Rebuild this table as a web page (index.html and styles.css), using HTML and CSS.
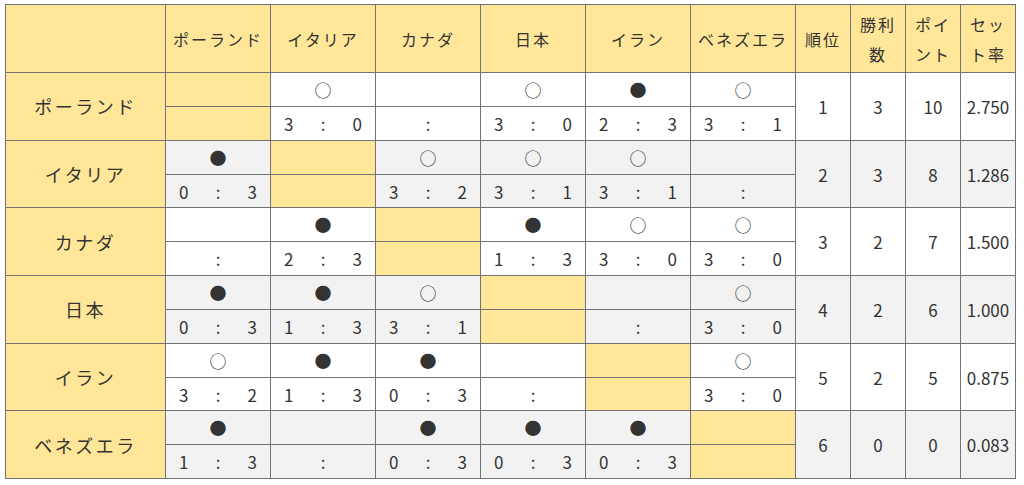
FILE: index.html
```html
<!DOCTYPE html>
<html lang="ja">
<head>
<meta charset="utf-8">
<link rel="stylesheet" href="styles.css">
</head>
<body>
<table class="league">
  <colgroup>
    <col class="c-name">
    <col class="c-team"><col class="c-team"><col class="c-team"><col class="c-team"><col class="c-team"><col class="c-team">
    <col class="c-res"><col class="c-res"><col class="c-res"><col class="c-res">
  </colgroup>
  <thead>
    <tr class="head">
      <th></th>
      <th>ポーランド</th><th>イタリア</th><th>カナダ</th><th>日本</th><th>イラン</th><th>ベネズエラ</th>
      <th>順位</th><th class="wrap">勝利数</th><th class="wrap">ポイント</th><th class="wrap">セット率</th>
    </tr>
  </thead>
  <tbody>
    <!-- ポーランド -->
    <tr class="top">
      <th rowspan="2" class="name">ポーランド</th>
      <td class="diag"></td>
      <td class="mark">○</td>
      <td class="mark"></td>
      <td class="mark">○</td>
      <td class="mark">●</td>
      <td class="mark">○</td>
      <td rowspan="2" class="res">1</td><td rowspan="2" class="res">3</td><td rowspan="2" class="res">10</td><td rowspan="2" class="res">2.750</td>
    </tr>
    <tr class="bot">
      <td class="diag"></td>
      <td><div class="score"><span>3</span><span>:</span><span>0</span></div></td>
      <td><div class="score empty"><span>:</span></div></td>
      <td><div class="score"><span>3</span><span>:</span><span>0</span></div></td>
      <td><div class="score"><span>2</span><span>:</span><span>3</span></div></td>
      <td><div class="score"><span>3</span><span>:</span><span>1</span></div></td>
    </tr>
    <!-- イタリア -->
    <tr class="top alt">
      <th rowspan="2" class="name">イタリア</th>
      <td class="mark">●</td>
      <td class="diag"></td>
      <td class="mark">○</td>
      <td class="mark">○</td>
      <td class="mark">○</td>
      <td class="mark"></td>
      <td rowspan="2" class="res">2</td><td rowspan="2" class="res">3</td><td rowspan="2" class="res">8</td><td rowspan="2" class="res">1.286</td>
    </tr>
    <tr class="bot alt">
      <td><div class="score"><span>0</span><span>:</span><span>3</span></div></td>
      <td class="diag"></td>
      <td><div class="score"><span>3</span><span>:</span><span>2</span></div></td>
      <td><div class="score"><span>3</span><span>:</span><span>1</span></div></td>
      <td><div class="score"><span>3</span><span>:</span><span>1</span></div></td>
      <td><div class="score empty"><span>:</span></div></td>
    </tr>
    <!-- カナダ -->
    <tr class="top">
      <th rowspan="2" class="name">カナダ</th>
      <td class="mark"></td>
      <td class="mark">●</td>
      <td class="diag"></td>
      <td class="mark">●</td>
      <td class="mark">○</td>
      <td class="mark">○</td>
      <td rowspan="2" class="res">3</td><td rowspan="2" class="res">2</td><td rowspan="2" class="res">7</td><td rowspan="2" class="res">1.500</td>
    </tr>
    <tr class="bot">
      <td><div class="score empty"><span>:</span></div></td>
      <td><div class="score"><span>2</span><span>:</span><span>3</span></div></td>
      <td class="diag"></td>
      <td><div class="score"><span>1</span><span>:</span><span>3</span></div></td>
      <td><div class="score"><span>3</span><span>:</span><span>0</span></div></td>
      <td><div class="score"><span>3</span><span>:</span><span>0</span></div></td>
    </tr>
    <!-- 日本 -->
    <tr class="top alt">
      <th rowspan="2" class="name">日本</th>
      <td class="mark">●</td>
      <td class="mark">●</td>
      <td class="mark">○</td>
      <td class="diag"></td>
      <td class="mark"></td>
      <td class="mark">○</td>
      <td rowspan="2" class="res">4</td><td rowspan="2" class="res">2</td><td rowspan="2" class="res">6</td><td rowspan="2" class="res">1.000</td>
    </tr>
    <tr class="bot alt">
      <td><div class="score"><span>0</span><span>:</span><span>3</span></div></td>
      <td><div class="score"><span>1</span><span>:</span><span>3</span></div></td>
      <td><div class="score"><span>3</span><span>:</span><span>1</span></div></td>
      <td class="diag"></td>
      <td><div class="score empty"><span>:</span></div></td>
      <td><div class="score"><span>3</span><span>:</span><span>0</span></div></td>
    </tr>
    <!-- イラン -->
    <tr class="top">
      <th rowspan="2" class="name">イラン</th>
      <td class="mark">○</td>
      <td class="mark">●</td>
      <td class="mark">●</td>
      <td class="mark"></td>
      <td class="diag"></td>
      <td class="mark">○</td>
      <td rowspan="2" class="res">5</td><td rowspan="2" class="res">2</td><td rowspan="2" class="res">5</td><td rowspan="2" class="res">0.875</td>
    </tr>
    <tr class="bot">
      <td><div class="score"><span>3</span><span>:</span><span>2</span></div></td>
      <td><div class="score"><span>1</span><span>:</span><span>3</span></div></td>
      <td><div class="score"><span>0</span><span>:</span><span>3</span></div></td>
      <td><div class="score empty"><span>:</span></div></td>
      <td class="diag"></td>
      <td><div class="score"><span>3</span><span>:</span><span>0</span></div></td>
    </tr>
    <!-- ベネズエラ -->
    <tr class="top alt">
      <th rowspan="2" class="name">ベネズエラ</th>
      <td class="mark">●</td>
      <td class="mark"></td>
      <td class="mark">●</td>
      <td class="mark">●</td>
      <td class="mark">●</td>
      <td class="diag"></td>
      <td rowspan="2" class="res">6</td><td rowspan="2" class="res">0</td><td rowspan="2" class="res">0</td><td rowspan="2" class="res">0.083</td>
    </tr>
    <tr class="bot alt">
      <td><div class="score"><span>1</span><span>:</span><span>3</span></div></td>
      <td><div class="score empty"><span>:</span></div></td>
      <td><div class="score"><span>0</span><span>:</span><span>3</span></div></td>
      <td><div class="score"><span>0</span><span>:</span><span>3</span></div></td>
      <td><div class="score"><span>0</span><span>:</span><span>3</span></div></td>
      <td class="diag"></td>
    </tr>
  </tbody>
</table>
</body>
</html>
```

FILE: styles.css
```css
html, body {
  margin: 0;
  padding: 0;
  background: #ffffff;
}

body {
  font-family: "Noto Sans CJK JP", "Noto Sans", sans-serif;
  color: #333333;
}

.league {
  margin: 4px 0 0 5px;
  width: 1010px;
  table-layout: fixed;
  border-collapse: collapse;
  border: 1px solid #8c8c8c;
}

.c-name { width: 160px; }
.c-team { width: 105px; }
.c-res { width: 55px; }

.league th,
.league td {
  border: 1px solid #737373;
  padding: 0;
  text-align: center;
  vertical-align: middle;
  font-weight: normal;
}

.head th {
  height: 67px;
  background: #ffe699;
  font-size: 16px;
  letter-spacing: 2px;
  line-height: 30px;
}

.head th.wrap {
  padding: 0 4px;
}

.name {
  background: #ffe699;
  font-size: 18px;
  letter-spacing: 2.5px;
}

.top td,
.bot td {
  background: #ffffff;
}

.alt td {
  background: #f2f2f2;
}

.top {
  height: 34px;
}

.bot {
  height: 33.7px;
}

.bot td {
  border-top: 1px solid #a6a6a6;
}

.league td.diag {
  background: #ffe699;
}

.mark {
  font-size: 17px;
  line-height: 1;
}

.res {
  font-size: 17px;
}

.score {
  display: flex;
  justify-content: space-between;
  padding: 0 13px 0 13px;
  font-size: 17px;
}

.score.empty {
  justify-content: center;
}
```
